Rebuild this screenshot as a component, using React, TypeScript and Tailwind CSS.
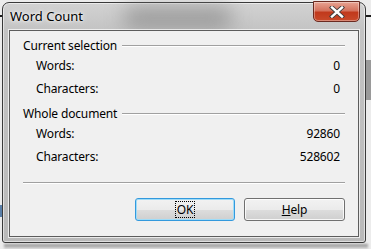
import React from 'react';

const font = "font-['Segoe_UI','Noto_Sans',sans-serif]";

function GroupHeader({ title }: { title: string }) {
    return (
        <div className="flex items-center h-[16px] pl-[13px] pr-[13px]">
            <span className="whitespace-nowrap">{title}</span>
            <div className="flex-1 ml-[5px] h-px bg-[#a0a0a0] border-b border-white box-content" />
        </div>
    );
}

function Row({ label, value }: { label: string; value: string }) {
    return (
        <div className="flex items-center justify-between h-[23px] pl-[26px] pr-[18px]">
            <span>{label}</span>
            <span>{value}</span>
        </div>
    );
}

function CloseButton() {
    return (
        <div className="absolute right-[5px] top-[-2px] w-[47px] h-[21px] rounded-b-[5px] border border-[#6b2a20] bg-[linear-gradient(to_bottom,#e8a493_0%,#d4735e_45%,#c1391c_55%,#c84a2b_100%)] flex items-center justify-center shadow-[inset_0_0_0_1px_rgba(255,255,255,0.35)]">
            <svg width="16" height="12" viewBox="0 0 16 12">
                <path d="M3 1.5 L13 10.5 M13 1.5 L3 10.5" stroke="#3d3d3d" strokeWidth="4.2" strokeLinecap="square" />
                <path d="M3 1.5 L13 10.5 M13 1.5 L3 10.5" stroke="#ffffff" strokeWidth="2.4" strokeLinecap="square" />
            </svg>
        </div>
    );
}

export default function App() {
    return (
        <div className={`w-[371px] h-[249px] bg-[#ececec] relative overflow-hidden text-[12px] tracking-[-0.15px] text-black ${font}`}>
            {/* things behind the dialog */}
            <div className="absolute left-0 top-[15px] w-full h-[2px] bg-[#1a1a1a]" />
            <div className="absolute left-0 top-[205px] w-[2px] h-[12px] bg-[#5a7fa8]" />
            <div className="absolute right-0 top-[60px] w-[5px] h-[40px] bg-[#9a9a9a]" />
            <div className="absolute left-[4px] top-[244px] w-[364px] h-[5px] bg-[linear-gradient(to_bottom,#8c8c8c,#dcdcdc)] blur-[1px]" />

            {/* window */}
            <div className="absolute left-[2px] top-[2px] w-[364px] h-[241px] rounded-t-[7px] rounded-b-[3px] border border-[#3a3a3a] bg-[linear-gradient(to_bottom,#d2d2d2_0%,#c3c3c3_12%,#b9b9b9_100%)] shadow-[inset_0_0_0_1px_rgba(255,255,255,0.55)] flex flex-col">
                <div className="absolute left-[120px] top-[4px] w-[110px] h-[22px] rounded-full bg-[#7a7a7a] opacity-60 blur-[10px]" />
                <div className="relative h-[27px] flex items-center pl-[7px]">
                    <span className="text-[13px] tracking-normal [text-shadow:0_0_6px_#ffffff,0_0_3px_#ffffff]">Word Count</span>
                    <CloseButton />
                </div>

                {/* client area */}
                <div className="relative mx-[6px] h-[207px] border border-[#5c5c5c] bg-[#f0f0f0] shadow-[0_0_0_1px_rgba(255,255,255,0.7)] flex flex-col pt-[7px]">
                    <GroupHeader title="Current selection" />
                    <Row label="Words:" value="0" />
                    <Row label="Characters:" value="0" />
                    <div className="h-[6px]" />
                    <GroupHeader title="Whole document" />
                    <Row label="Words:" value="92860" />
                    <Row label="Characters:" value="528602" />
                    <div className="mx-[13px] mt-[14px] h-px bg-[#a0a0a0] border-b border-white box-content" />

                    <div className="flex justify-end gap-[9px] mt-[14px] pr-[13px]">
                        <button className="w-[100px] h-[23px] rounded-[3px] border border-[#3399dd] bg-[linear-gradient(to_bottom,#f2f2f2_0%,#ebebeb_50%,#dddddd_51%,#cfcfcf_100%)] shadow-[inset_0_0_0_1px_#9fdcf8] flex items-center justify-center">
                            <span className="border border-dotted border-black px-[1px] leading-[15px]">OK</span>
                        </button>
                        <button className="w-[101px] h-[23px] rounded-[3px] border border-[#707070] bg-[linear-gradient(to_bottom,#f2f2f2_0%,#ebebeb_50%,#dddddd_51%,#cfcfcf_100%)] shadow-[inset_0_0_0_1px_rgba(255,255,255,0.8)] flex items-center justify-center">
                            <span><span className="underline">H</span>elp</span>
                        </button>
                    </div>
                </div>
            </div>
        </div>
    );
}
